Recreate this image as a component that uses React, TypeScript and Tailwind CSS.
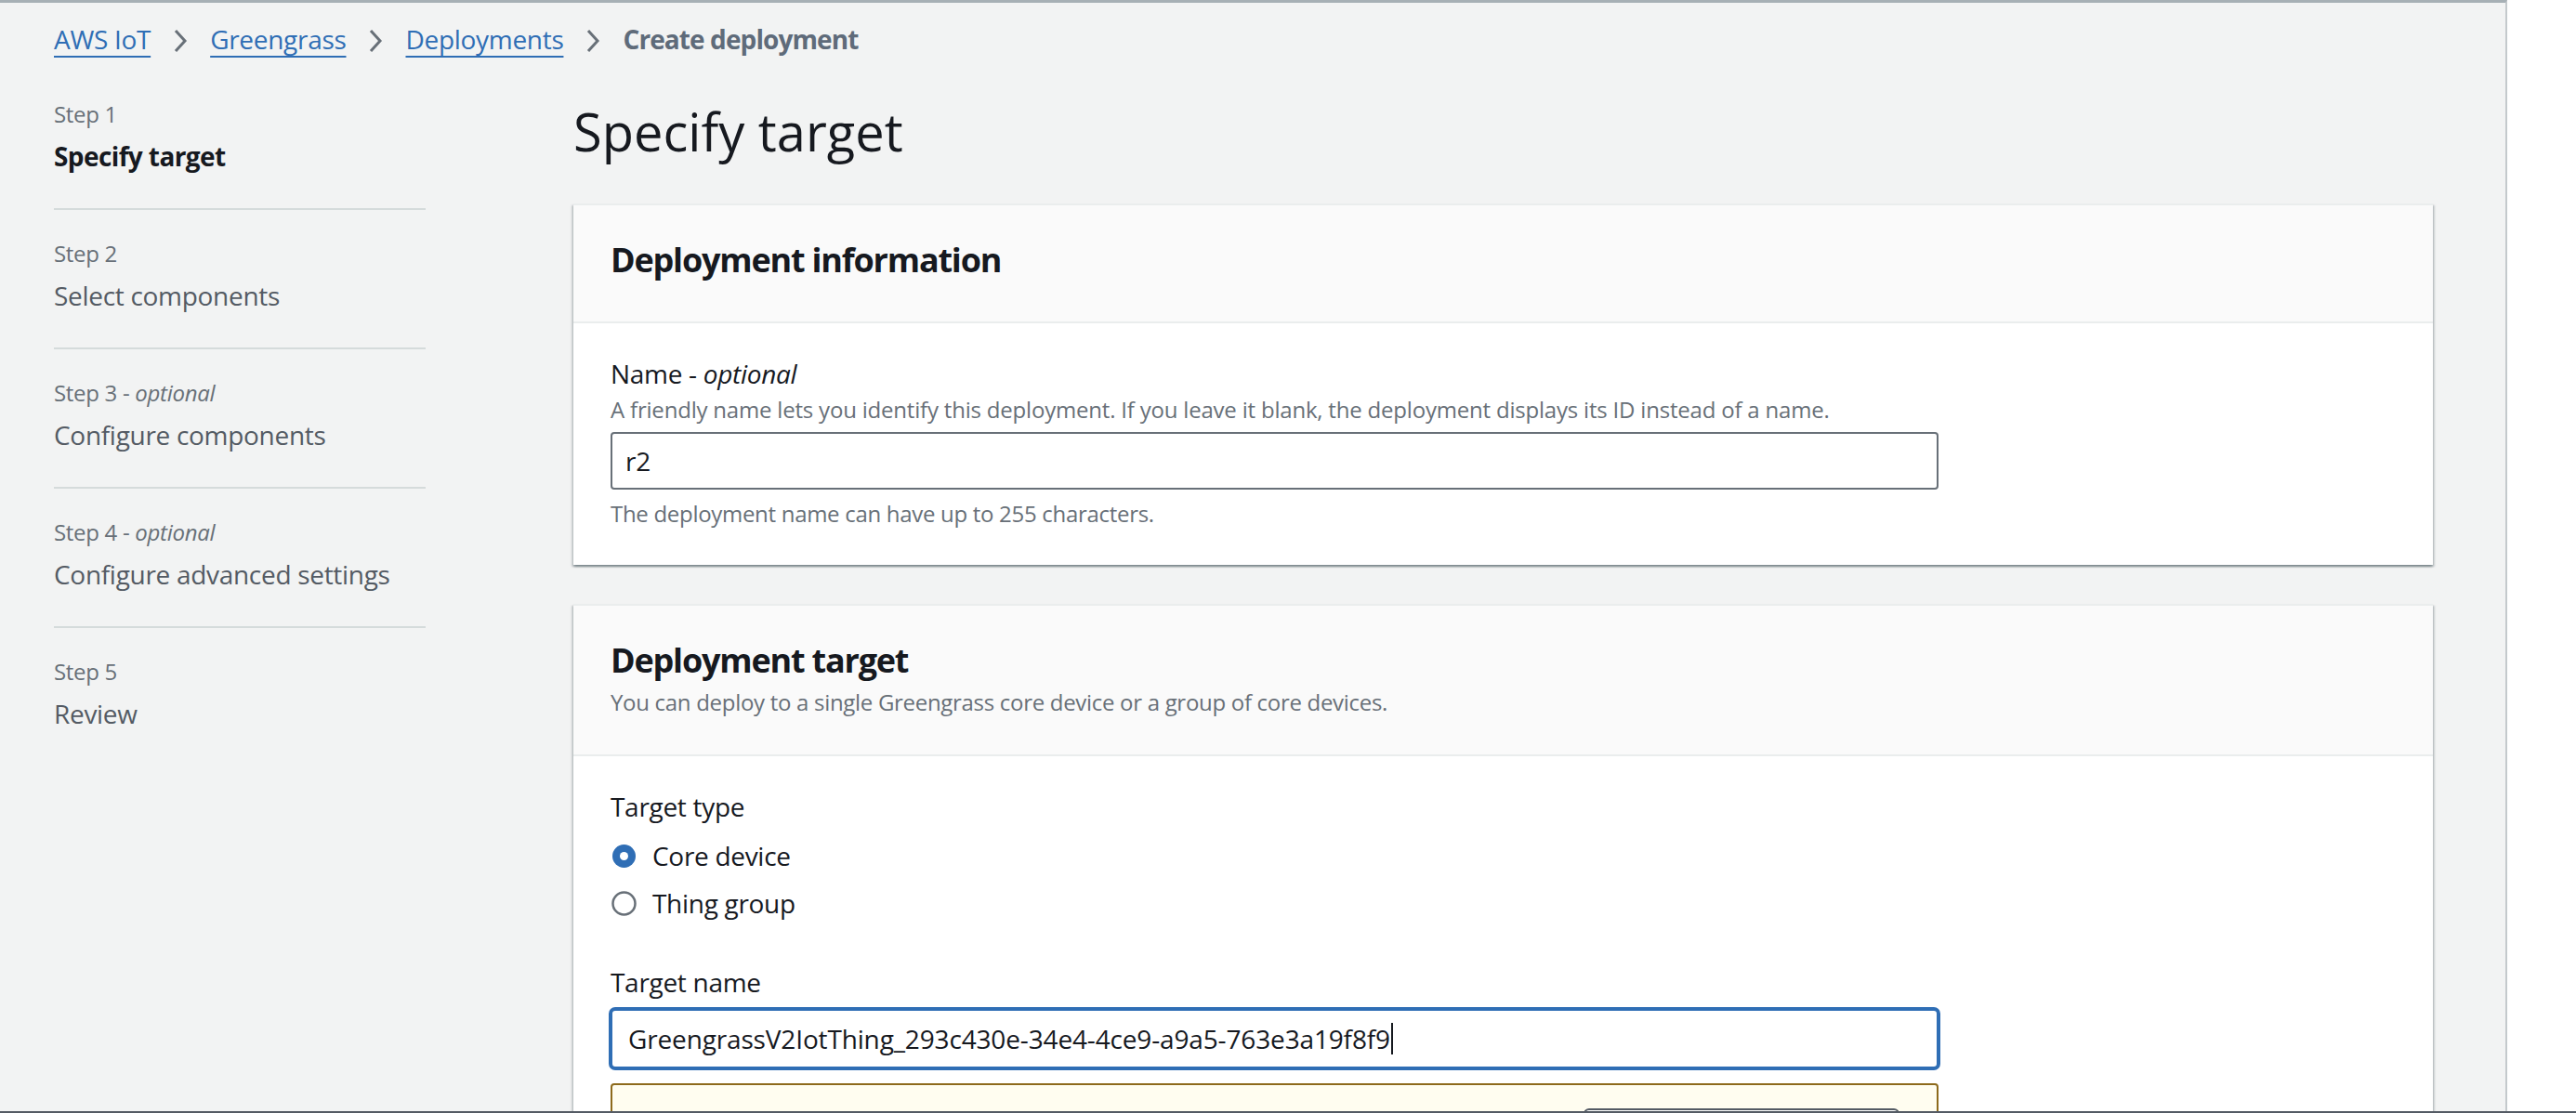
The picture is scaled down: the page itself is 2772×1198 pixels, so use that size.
import React from "react";

type Step = {
  label: string;
  optional?: boolean;
  title: string;
  active?: boolean;
};

const steps: Step[] = [
  { label: "Step 1", title: "Specify target", active: true },
  { label: "Step 2", title: "Select components" },
  { label: "Step 3", optional: true, title: "Configure components" },
  { label: "Step 4", optional: true, title: "Configure advanced settings" },
  { label: "Step 5", title: "Review" },
];

const Chevron = () => (
  <svg width="16" height="26" viewBox="0 0 16 26" className="mx-[24px] mt-[3px] shrink-0">
    <path d="M3 2 L13 13 L3 24" fill="none" stroke="#687078" strokeWidth="3" />
  </svg>
);

const Crumb = ({ children }: { children: React.ReactNode }) => (
  <a className="text-[#2f6eb5] underline decoration-2 underline-offset-[7px]">{children}</a>
);

const Radio = ({ checked, label }: { checked?: boolean; label: string }) => (
  <div className="flex h-[44px] items-center gap-[16px]">
    <svg width="29" height="29" viewBox="0 0 29 29" className="shrink-0">
      {checked ? (
        <>
          <circle cx="14.5" cy="14.5" r="12.5" fill="#2f6eb5" />
          <circle cx="14.5" cy="14.5" r="4.5" fill="#ffffff" />
        </>
      ) : (
        <circle cx="14.5" cy="14.5" r="12" fill="#ffffff" stroke="#687078" strokeWidth="2.5" />
      )}
    </svg>
    <span className="text-[28px] leading-[44px] text-[#16191f]">{label}</span>
  </div>
);

const Card = ({
  title,
  description,
  children,
}: {
  title: string;
  description?: string;
  children: React.ReactNode;
}) => (
  <section className="bg-white border-t-2 border-[#eaeded] shadow-[0_2px_2px_0_rgba(0,28,36,0.3),2px_2px_2px_0_rgba(0,28,36,0.15),-2px_2px_2px_0_rgba(0,28,36,0.15)]">
    <div
      className={
        description
          ? "bg-[#fafafa] border-b-2 border-[#eaeded] px-[40px] pt-[37px] pb-[40px]"
          : "bg-[#fafafa] border-b-2 border-[#eaeded] px-[40px] pt-[37px] pb-[44px]"
      }
    >
      <h2 className="text-[36px] leading-[44px] font-bold tracking-[-1.2px] text-[#16191f]">{title}</h2>
      {description && (
        <p className="mt-[7px] text-[24px] leading-[32px] text-[#687078]">{description}</p>
      )}
    </div>
    <div className="px-[40px] pt-[34px] pb-[39px]">{children}</div>
  </section>
);

export default function App() {
  return (
    <div className="flex h-[1198px] w-[2772px] flex-col overflow-hidden bg-white font-['Open_Sans',sans-serif] tracking-[-0.3px]">
      <div className="h-[1196px] w-[2698px] overflow-hidden border-t-[3px] border-r-2 border-t-[#a7b0b5] border-r-[#c4c9cc] bg-[#f2f3f3] pl-[58px] pr-[78px]">
        {/* breadcrumbs */}
        <nav className="flex items-center pt-[19px] text-[28px] leading-[40px]">
          <Crumb>AWS IoT</Crumb>
          <Chevron />
          <Crumb>Greengrass</Crumb>
          <Chevron />
          <Crumb>Deployments</Crumb>
          <Chevron />
          <span className="font-bold tracking-[-0.9px] text-[#5f6b7a]">Create deployment</span>
        </nav>

        <div className="mt-[43px] flex">
          {/* wizard steps */}
          <ol className="w-[400px] shrink-0 pt-[2px]">
            {steps.map((s, i) => (
              <li
                key={s.label}
                className={
                  i === 0
                    ? "border-b-2 border-[#d5dbdb] pb-[36px]"
                    : i === steps.length - 1
                    ? "pt-[31px]"
                    : "border-b-2 border-[#d5dbdb] pt-[31px] pb-[36px]"
                }
              >
                <div className="text-[24px] leading-[32px] text-[#687078]">
                  {s.label}
                  {s.optional && (
                    <>
                      {" - "}
                      <i>optional</i>
                    </>
                  )}
                </div>
                <div
                  className={
                    s.active
                      ? "mt-[9px] text-[28px] leading-[40px] font-bold tracking-[-0.6px] text-[#16191f]"
                      : "mt-[9px] text-[28px] leading-[40px] text-[#545b64]"
                  }
                >
                  {s.title}
                </div>
              </li>
            ))}
          </ol>

          {/* main content */}
          <main className="ml-[159px] flex-1">
            <h1 className="text-[56px] leading-[72px] font-normal tracking-normal text-[#16191f]">Specify target</h1>

            <div className="mt-[42px]">
              <Card title="Deployment information">
                <div className="text-[28px] leading-[40px] text-[#16191f]">
                  Name - <i>optional</i>
                </div>
                <p className="mt-[3px] text-[24px] leading-[32px] tracking-[-0.2px] text-[#687078]">
                  A friendly name lets you identify this deployment. If you leave it blank, the deployment displays its ID instead of a name.
                </p>
                <div className="mt-[8px] flex h-[62px] w-[1429px] items-center rounded-[4px] border-2 border-[#687078] bg-white px-[14px] text-[28px] text-[#16191f]">
                  r2
                </div>
                <p className="mt-[10px] text-[24px] leading-[32px] text-[#687078]">
                  The deployment name can have up to 255 characters.
                </p>
              </Card>
            </div>

            <div className="mt-[42px]">
              <Card
                title="Deployment target"
                description="You can deploy to a single Greengrass core device or a group of core devices."
              >
                <div className="text-[28px] leading-[40px] text-[#16191f]">Target type</div>
                <div className="mt-[11px] flex flex-col gap-[7px]">
                  <Radio checked label="Core device" />
                  <Radio label="Thing group" />
                </div>

                <div className="mt-[43px] text-[28px] leading-[40px] text-[#16191f]">Target name</div>
                <div className="mt-[9px] flex h-[64px] w-[1429px] items-center rounded-[5px] border-2 border-[#2f6eb5] bg-white px-[17px] text-[28px] tracking-[-0.15px] text-[#16191f] shadow-[0_0_0_2px_#2f6eb5]">
                  <span>GreengrassV2IotThing_293c430e-34e4-4ce9-a9a5-763e3a19f8f9</span>
                  <span className="ml-[1px] h-[34px] w-[2px] bg-[#16191f]" />
                </div>

                <div className="mt-[16px] flex h-[160px] w-[1429px] justify-end rounded-[4px] border-2 border-[#8d6a1c] bg-[#fffdf0] pt-[25px] pr-[40px]">
                  <div className="h-[64px] w-[340px] rounded-[6px] border-2 border-[#545b64] bg-white" />
                </div>
              </Card>
            </div>
          </main>
        </div>
      </div>
      <div className="h-[2px] w-full bg-[#545b64]" />
    </div>
  );
}
